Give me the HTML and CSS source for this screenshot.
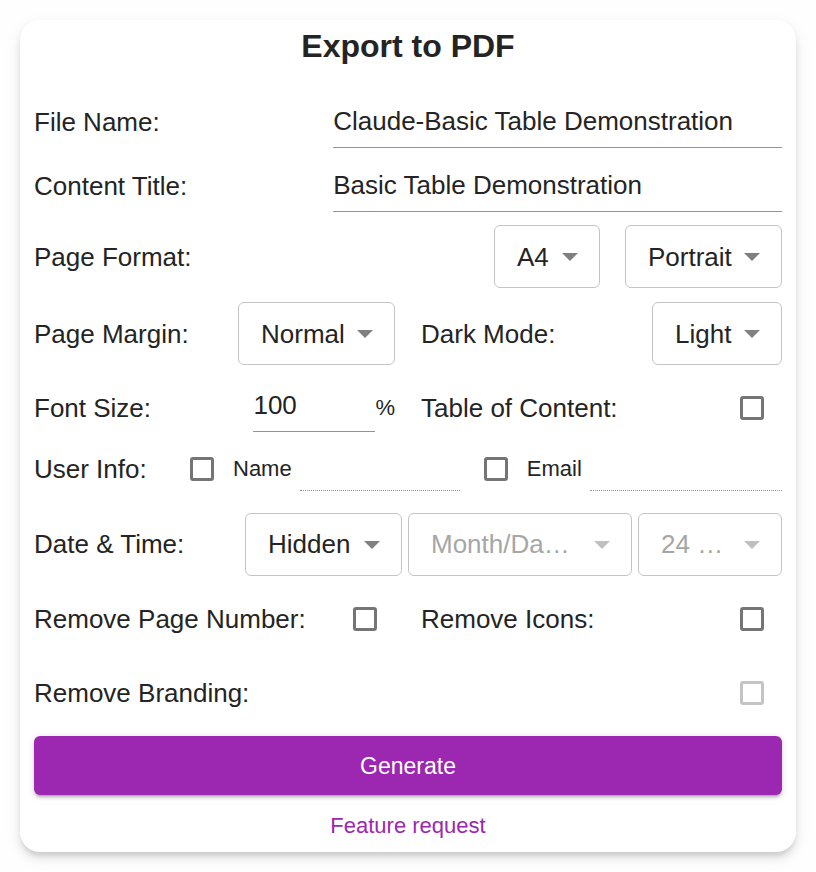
FILE: index.html
```html
<!DOCTYPE html>
<html lang="en">
<head>
  <meta charset="UTF-8">
  <title>Export to PDF</title>
  <meta name="viewport" content="width=device-width, initial-scale=1.0">
  <link rel="stylesheet" href="styles.css">
</head>
<body>
  <form class="card">
    <h1>Export to PDF</h1>

    <div class="row">
      <label for="file-name">File Name:</label>
      <input class="text wide" type="text" id="file-name" value="Claude-Basic Table Demonstration">
    </div>
    <div class="row">
      <label for="content-title">Content Title:</label>
      <input class="text wide" type="text" id="content-title" value="Basic Table Demonstration">
    </div>

    <div class="row select-row">
      <label for="page-format">Page Format:</label>
      <div class="selects">
        <div class="select format">
          <select id="page-format"><option>A4</option><option>A3</option></select>
          <svg viewBox="0 0 16 8"><path d="M0 0h16L8 8z"/></svg>
        </div>
        <div class="select medium">
          <select aria-label="Orientation"><option>Portrait</option><option>Landscape</option></select>
          <svg viewBox="0 0 16 8"><path d="M0 0h16L8 8z"/></svg>
        </div>
      </div>
    </div>

    <div class="columns select-row">
      <div class="cell">
        <label for="page-margin">Page Margin:</label>
        <div class="select medium">
          <select id="page-margin"><option>Normal</option><option>None</option></select>
          <svg viewBox="0 0 16 8"><path d="M0 0h16L8 8z"/></svg>
        </div>
      </div>
      <div class="cell">
        <label for="dark-mode">Dark Mode:</label>
        <div class="select mode">
          <select id="dark-mode"><option>Light</option><option>Dark</option></select>
          <svg viewBox="0 0 16 8"><path d="M0 0h16L8 8z"/></svg>
        </div>
      </div>
    </div>

    <div class="columns font-row">
      <div class="cell">
        <label for="font-size">Font Size:</label>
        <div class="percent">
          <input class="text" type="text" id="font-size" value="100">
          <span>%</span>
        </div>
      </div>
      <div class="cell">
        <label for="toc">Table of Content:</label>
        <input class="check" type="checkbox" id="toc">
      </div>
    </div>

    <div class="row user-row">
      <span class="user-label">User Info:</span>
      <input type="checkbox" id="show-name">
      <label class="small" for="show-name">Name</label>
      <input class="text dotted name" type="text" aria-label="Name" disabled>
      <input type="checkbox" id="show-email">
      <label class="small" for="show-email">Email</label>
      <input class="text dotted email" type="text" aria-label="Email" disabled>
    </div>

    <div class="row date-row">
      <label for="date-time">Date &amp; Time:</label>
      <div class="selects tight">
        <div class="select medium">
          <select id="date-time"><option>Hidden</option><option>Shown</option></select>
          <svg viewBox="0 0 16 8"><path d="M0 0h16L8 8z"/></svg>
        </div>
        <div class="select date">
          <select aria-label="Date format" disabled><option>Month/Day/Year</option></select>
          <svg viewBox="0 0 16 8"><path d="M0 0h16L8 8z"/></svg>
        </div>
        <div class="select time">
          <select aria-label="Time format" disabled><option>24 Hours</option></select>
          <svg viewBox="0 0 16 8"><path d="M0 0h16L8 8z"/></svg>
        </div>
      </div>
    </div>

    <div class="columns check-row">
      <div class="cell">
        <label for="page-number">Remove Page Number:</label>
        <input class="check" type="checkbox" id="page-number">
      </div>
      <div class="cell">
        <label for="icons">Remove Icons:</label>
        <input class="check" type="checkbox" id="icons">
      </div>
    </div>
    <div class="row check-row">
      <label for="branding">Remove Branding:</label>
      <input class="check" type="checkbox" id="branding" disabled>
    </div>

    <button type="button">Generate</button>
    <a href="#">Feature request</a>
  </form>
</body>
</html>
```
FILE: styles.css
```css
* { box-sizing: border-box; }
body { margin: 0; padding: 20px; background: #fefefe; color: #242424; font-family: Helvetica, "Liberation Sans", Arial, sans-serif; font-size: 26px; line-height: 30px; }
.card { display: flex; flex-direction: column; background: #fff; border-radius: 20px; padding: 8px 14px 10px; box-shadow: 0 5px 5px -2px rgba(0,0,0,0.09), 0 6px 8px rgba(0,0,0,0.09), 0 5px 18px rgba(0,0,0,0.06); }
h1 { margin: 0 0 26px; font-size: 32px; line-height: 36px; text-align: center; }

/* Rows */
.row, .cell { display: flex; align-items: center; justify-content: space-between; }
.row { min-height: 64px; }
.columns { display: grid; grid-template-columns: 1fr 1fr; column-gap: 26px; }
.select-row { min-height: 77px; }
.font-row { min-height: 72px; }
.date-row { min-height: 76px; }
.check-row { min-height: 74px; }

/* Text inputs */
input, select, button { font: inherit; color: inherit; margin: 0; }
.text { min-width: 0; height: 52px; padding: 0; border: 0; border-bottom: 1px solid #949494; border-radius: 0; background: none; outline: none; }
.wide { width: 60%; }
.percent { display: flex; align-items: center; font-size: 22px; }
.percent .text { width: 122px; height: 48px; padding-bottom: 4px; font-size: 26px; }

/* Selects */
.selects { display: flex; gap: 25px; }
.tight { gap: 6px; }
.select { position: relative; height: 63px; }
.select select { appearance: none; width: 100%; height: 100%; padding: 0 44px 0 22px; border: 1px solid #c4c4c4; border-radius: 6px; background: #fff; text-overflow: ellipsis; }
.select select:disabled { padding-right: 52px; color: #a6a6a6; opacity: 1; }
.select svg { position: absolute; right: 22px; top: 28px; width: 16px; height: 8px; fill: #808080; pointer-events: none; }
.select select:disabled + svg { fill: #c0c0c0; }
.format { width: 106px; }
.medium { width: 157px; }
.mode { width: 130px; }
.date { width: 224px; }
.time { width: 144px; }

/* Checkboxes */
input[type="checkbox"] { appearance: none; flex: none; width: 24px; height: 24px; border: 3px solid #757575; border-radius: 3px; background: #fff; }
input[type="checkbox"]:checked { background: #9c27b0; }
input[type="checkbox"]:disabled { border-color: #c4c4c4; }
.check[type="checkbox"] { margin-right: 18px; }

/* User info */
.user-row { min-height: 50px; margin-bottom: 12px; }
.user-label { width: 156px; }
.small { font-size: 22px; margin: 0 8px 0 19px; }
.dotted { height: 44px; border-bottom: 1px dotted #949494; }
.name { flex: 5 1 0; margin-right: 24px; }
.email { flex: 6 1 0; }

button { height: 59px; margin-top: 6px; border: 0; border-radius: 6px; background: #9c27b0; color: #fff; font-size: 23px; cursor: pointer; box-shadow: 0 4px 2px -3px rgba(0,0,0,0.2), 0 3px 3px rgba(0,0,0,0.14), 0 1px 7px rgba(0,0,0,0.12); }
a { align-self: center; margin-top: 16px; margin-bottom: 1px; color: #9c27b0; font-size: 22px; text-decoration: none; }
```
